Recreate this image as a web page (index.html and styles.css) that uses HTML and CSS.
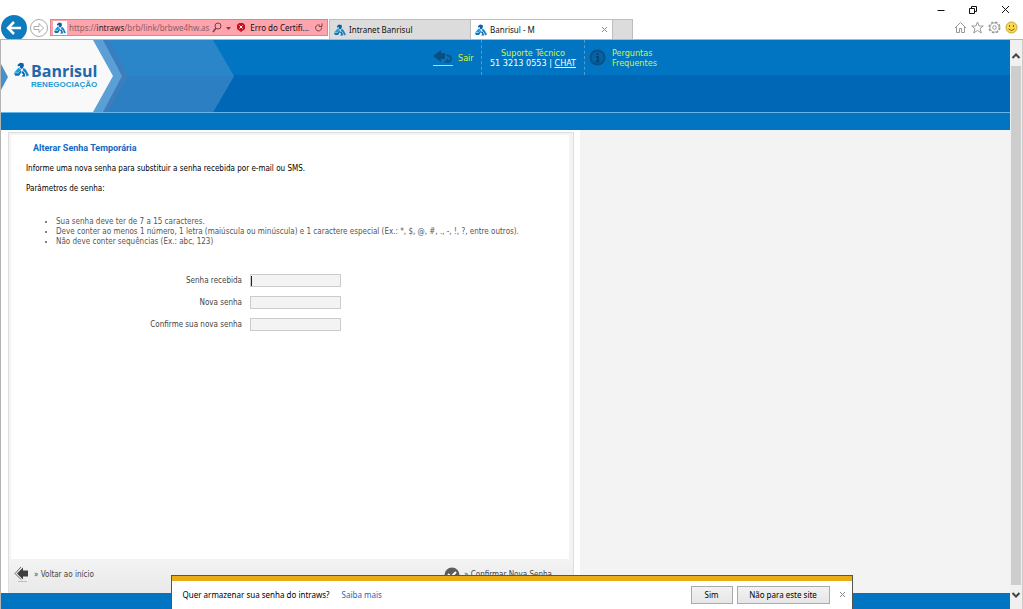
FILE: index.html
```html
<!DOCTYPE html>
<html lang="pt-BR">
<head>
<meta charset="utf-8">
<title>Banrisul - M</title>
<link rel="stylesheet" href="styles.css">
</head>
<body>
<svg class="defs" aria-hidden="true">
  <symbol id="mark" viewBox="0 0 24 24">
    <path d="M6 4l4-3 5 1 1 4-3 5-4-2 1-3-4 1z" fill="#0d5fa8"/>
    <path d="M7 9l5 3-5 5H0l3-3z" fill="#1aa0dc"/>
    <path d="M0 18h7l4-5 1 3-4 6H2z" fill="#0b72bb"/>
    <path d="M15 9l4 3 5 9-4 2-2-6-4-4z" fill="#1287cb"/>
    <path d="M12 17l2-3 3 4 1 5h-6l3-3z" fill="#0d5fa8"/>
  </symbol>
</svg>
<div class="window">
  <header class="chrome">
    <div class="controls">
      <button class="ctl" aria-label="Minimizar"><svg width="11" height="11" viewBox="0 0 11 11"><path d="M1.500 6.500h7" stroke="#111" fill="none"/></svg></button>
      <button class="ctl" aria-label="Restaurar"><svg width="11" height="11" viewBox="0 0 11 11"><path d="M1.500 4.500h5v5h-5zM3.500 4.500v-2h5v5h-2" stroke="#111" fill="none"/></svg></button>
      <button class="ctl" aria-label="Fechar"><svg width="11" height="11" viewBox="0 0 11 11"><path d="M2 2l7 7M9 2l-7 7" stroke="#111" fill="none"/></svg></button>
    </div>
    <div class="bar">
      <button class="back" aria-label="Voltar"><svg width="26" height="26" viewBox="0 0 26 26"><circle cx="13" cy="13" r="13" fill="#0f7dbd"/><path d="M20 13H8M13 7l-6 6 6 6" stroke="#fff" stroke-width="2.500" fill="none"/></svg></button>
      <button class="fwd" aria-label="Avançar"><svg width="18" height="18" viewBox="0 0 18 18"><circle cx="9" cy="9" r="8.500" fill="#fff" stroke="#aaa"/><path d="M4 7.500h5V4.500L13.500 9 9 13.500v-3H4z" fill="#fff" stroke="#aaa"/></svg></button>
      <div class="address">
        <span class="tile"><svg width="12" height="12"><use href="#mark"/></svg></span>
        <span class="url">https://<b>intraws</b>/brb/link/brbwe4hw.as</span>
        <svg width="20" height="12" viewBox="0 0 20 12"><circle cx="6" cy="4" r="3" fill="none" stroke="#754249"/><path d="M4 6L1 10" stroke="#754249" stroke-width="1.500"/><path d="M14 5h5l-2.500 3z" fill="#754249"/></svg>
        <svg class="shield" width="8" height="9" viewBox="0 0 8 9"><path d="M0 2L2 0h4l2 2v4L4 9 0 6z" fill="#c51420"/><path d="M2.500 2.500l3 3m0-3l-3 3" stroke="#fff"/></svg>
        <span class="cert">Erro do Certifi...</span>
        <svg width="9" height="10" viewBox="0 0 9 10"><path d="M7.500 4.500a3 3 0 1 1-1.500-2.200" fill="none" stroke="#754249"/><path d="M5 3.500h3v-3" fill="none" stroke="#754249"/></svg>
      </div>
      <nav class="tabs">
        <button class="tab"><svg width="12" height="12"><use href="#mark"/></svg>Intranet Banrisul</button>
        <button class="tab active"><svg width="12" height="12"><use href="#mark"/></svg>Banrisul - M<svg class="tabx" width="7" height="7" viewBox="0 0 7 7"><path d="M1 1l5 5M6 1L1 6" stroke="#888"/></svg></button>
        <button class="newtab" aria-label="Nova guia"></button>
      </nav>
      <div class="tools">
        <svg width="13" height="13" viewBox="0 0 13 13"><path d="M1 7l5.500-5.500L12 7M2.500 6v5.500h3v-4h2v4h3V6" fill="none" stroke="#999"/></svg>
        <svg width="13" height="13" viewBox="0 0 13 13"><path d="M6.500 1l1.600 4h4.200L9 7.700l1.300 4.300-3.800-2.600L2.700 12 4 7.700.7 5h4.200z" fill="none" stroke="#999"/></svg>
        <svg width="13" height="13" viewBox="0 0 13 13"><circle cx="6.500" cy="6.500" r="5.300" fill="none" stroke="#999" stroke-width="1.500" stroke-dasharray="2.500 1.650"/><circle cx="6.500" cy="6.500" r="4.500" fill="#fff" stroke="#999" stroke-width=".8"/><circle cx="6.500" cy="6.500" r="1.800" fill="none" stroke="#999"/></svg>
        <svg width="13" height="13" viewBox="0 0 13 13"><circle cx="6.500" cy="6.500" r="5.500" fill="#f9d94d" stroke="#c9a535"/><path d="M4.500 4v2M8.500 4v2M3.500 8q3 3 6 0" fill="none" stroke="#80631c"/></svg>
      </div>
    </div>
  </header>

  <div class="viewport">
    <div class="page">
      <div class="banner">
        <svg class="art" width="236" height="72" viewBox="0 0 236 72">
          <path d="M92 0H212L233 36 212 72H92z" fill="#2a86c8"/>
          <path d="M92 36H233L212 72H92z" fill="#2c7fc2"/>
          <path d="M92 0H107L127 36 107 72H92z" fill="#3b7dbd"/>
          <path d="M92 0H102L121 36 102 72H92z" fill="#5b9fd7"/>
          <path d="M0 0H92L112 36 92 72H0z" fill="#f8f9f8"/>
          <path d="M0 24L7 37 0 50z" fill="#4790c9"/>
        </svg>
        <div class="brand">
          <svg width="15" height="15"><use href="#mark"/></svg>
          <div class="names"><span class="name">Banrisul</span><span class="sub">RENEGOCIAÇÃO</span></div>
        </div>
        <nav class="links">
          <a class="link exit" href="#"><svg width="20" height="18" viewBox="0 0 20 18"><path d="M0 7l8-6v3h4v6H8v3z" fill="#084f83"/><path d="M13 6q6 1 5 5-1 2-5 2l2-3" fill="none" stroke="#0b568c" stroke-width="2"/><path d="M0 16.500h20" stroke="#b9d8ee"/></svg>Sair</a>
          <div class="link support"><span>Suporte Técnico</span><span class="phone">51 3213 0553 | <a href="#">CHAT</a></span></div>
          <a class="link faq" href="#"><svg width="17" height="17" viewBox="0 0 17 17"><circle cx="8.500" cy="8.500" r="7" fill="#0763a6" stroke="#075288" stroke-width="2"/><path d="M8.500 4v2M7 8h2v4M6.500 12.500h4" stroke="#064777" stroke-width="2" fill="none"/></svg><span>Perguntas<br>Frequentes</span></a>
        </nav>
      </div>
      <div class="strip"></div>
      <div class="columns">
        <main class="sheet">
          <form class="panel">
            <div class="content">
              <h1>Alterar Senha Temporária</h1>
              <p>Informe uma nova senha para substituir a senha recebida por e-mail ou SMS.</p>
              <p>Parâmetros de senha:</p>
              <ul>
                <li>Sua senha deve ter de 7 a 15 caracteres.</li>
                <li>Deve conter ao menos 1 número, 1 letra (maiúscula ou minúscula) e 1 caractere especial (Ex.: *, $, @, #, ., -, !, ?, entre outros).</li>
                <li>Não deve conter sequências (Ex.: abc, 123)</li>
              </ul>
              <div class="fields">
                <label for="old">Senha recebida</label><span class="slot caret"><input id="old" type="password"></span>
                <label for="new">Nova senha</label><span class="slot"><input id="new" type="password"></span>
                <label for="again">Confirme sua nova senha</label><span class="slot"><input id="again" type="password"></span>
              </div>
            </div>
            <div class="actions">
              <a href="#"><svg width="16" height="17" viewBox="0 0 16 17"><path d="M3 7.500l6-6v3h5v6H9v3z" fill="#3e3e3e"/><path d="M7 1L1 7.500l6 6" fill="none" stroke="#666"/><path d="M4 15.500h9" stroke="#bbb"/></svg>» Voltar ao início</a>
              <button type="button"><svg width="16" height="16" viewBox="0 0 16 16"><circle cx="8" cy="8" r="7.500" fill="#5c5c5c"/><path d="M4 7l3 3 5-5" fill="none" stroke="#fff" stroke-width="2"/></svg>» Confirmar Nova Senha</button>
            </div>
          </form>
        </main>
      </div>
      <div class="foot"></div>
    </div>
    <div class="scroll">
      <svg width="10" height="8" viewBox="0 0 10 8"><path d="M1.500 6L5 2.500 8.500 6" fill="none" stroke="#444" stroke-width="2"/></svg>
      <div class="thumb"></div>
      <svg width="10" height="8" viewBox="0 0 10 8"><path d="M1.500 2L5 5.500 8.500 2" fill="none" stroke="#444" stroke-width="2"/></svg>
    </div>
  </div>

  <aside class="notice">
    <span>Quer armazenar sua senha do intraws?</span>
    <a href="#">Saiba mais</a>
    <button class="btn yes">Sim</button>
    <button class="btn no">Não para este site</button>
    <button class="close" aria-label="Fechar"><svg width="7" height="7" viewBox="0 0 7 7"><path d="M1 1l5 5M6 1L1 6" stroke="#888"/></svg></button>
  </aside>
</div>
</body>
</html>
```

FILE: styles.css
```css
* { box-sizing: border-box; }
body { margin: 0; font: 9px/10px "DejaVu Sans Condensed", "DejaVu Sans", sans-serif; color: #555; }
button { padding: 0; border: 0; background: none; font: inherit; color: inherit; }
svg { flex: none; display: block; }
.defs { position: absolute; width: 0; height: 0; }
.window { position: relative; display: flex; flex-direction: column; min-height: 100vh; overflow: hidden; background: #fff; }

.chrome { display: flex; flex-direction: column; border-bottom: 1px solid #b4b4b4; height: 40px; font: 8px/12px "Noto Sans", sans-serif; color: #111; }
.controls { display: flex; justify-content: flex-end; gap: 21px; padding: 4px 12px 0; height: 15px; }
.bar { display: flex; align-items: flex-start; flex: 1; padding-left: 1px; }
.back { height: 24px; overflow: hidden; }
.fwd { margin: 4px 2px 0 3px; }
.address { display: flex; align-items: center; width: 278px; height: 17px; margin-top: 4px; padding: 0 4px 0 2px; background: #ffa3ad; border: 1px solid #d28a92; }
.tile { background: #fff; padding: 1px; }
.url { flex: 1; margin-left: 2px; color: #8a5f65; white-space: nowrap; }
.url b { font-weight: 400; color: #222; }
.shield { margin: 0 5px; }
.cert { margin-right: 5px; white-space: nowrap; }
.tabs { display: flex; margin: 4px 0 0 1px; height: 20px; }
.tab { display: flex; align-items: center; gap: 3px; width: 142px; padding: 0 4px; background: #dcdcdc; border: 1px solid #bdbdbd; border-bottom: 0; }
.tab.active { background: #fff; border-left: 0; }
.tabx { margin-left: auto; }
.newtab { width: 20px; background: #dcdcdc; border: 1px solid #bdbdbd; border-width: 1px 1px 0 0; }
.tools { display: flex; gap: 4px; margin: 6px 5px 0 auto; }

.viewport { display: flex; flex: 1; border-left: 1px solid #b4b4b4; }
.page { flex: 1; display: flex; flex-direction: column; min-width: 0; background: #f3f3f3; }
.banner { position: relative; display: flex; height: 73px; background: linear-gradient(#0275c2 0 35px, #0067b6 35px); border-bottom: 1px solid #69b6e6; }
.art { position: absolute; top: 0; left: 0; }
.brand { position: relative; display: flex; align-items: flex-start; gap: 2px; width: 432px; padding: 22px 0 0 13px; }
.names { display: flex; flex-direction: column; }
.name { font: 700 16px/18px "Open Sans", sans-serif; color: #2467ab; }
.sub { font: 700 8px/9px "Liberation Sans", sans-serif; color: #1b9ad7; }
.links { display: flex; height: 35px; color: #d9f03b; }
.link { display: flex; align-items: center; color: inherit; text-decoration: none; }
.exit { gap: 5px; width: 48px; }
.support { flex-direction: column; justify-content: center; width: 104px; border: dashed #4b9ed5; border-width: 0 1px; }
.phone, .phone a { color: #fff; }
.faq { gap: 6px; padding-left: 4px; }
.strip { height: 17px; background: #0275c2; }
.columns { flex: 1; display: flex; }
.sheet { display: flex; width: 579px; padding: 2px 6px 0 7px; background: #fff; }
.panel { flex: 1; min-width: 0; display: flex; flex-direction: column; border: 1px solid #dedede; border-bottom: 0; background: #f3f3f3; font-size: 8px; }
.content { flex: 1; margin: 2px 4px 0 2px; padding: 7px 15px; background: #fff; color: #000; }
h1 { margin: 0 7px; font: 700 9px/12px Roboto, sans-serif; color: #1169c2; }
p { margin: 10px 0; }
ul { margin: 23px 0 27px; padding-left: 30px; color: #555; white-space: nowrap; }
.fields { display: grid; grid-template-columns: 216px 91px; gap: 9px 8px; align-items: center; text-align: right; color: #444; }
.slot { position: relative; }
.slot input { display: block; width: 100%; height: 13px; padding: 0 2px; border: 1px solid #ccc; background: #f3f3f3; font: inherit; }
.caret::before { content: ""; position: absolute; left: 1px; top: 2px; width: 1px; height: 10px; background: #222; }
.actions { display: flex; justify-content: space-between; height: 34px; padding: 7px 21px 0 5px; background: linear-gradient(#f3f3f3, #e9e9e9); }
.actions a, .actions button { display: flex; align-items: center; gap: 4px; height: 17px; color: #444; text-decoration: none; }
.foot { height: 16px; background: #0275c2; }

.scroll { display: flex; flex-direction: column; align-items: center; gap: 6px; width: 13px; padding: 12px 1px 10px; background: #f0f0f0; border-right: 1px solid #ccc; }
.thumb { flex: 1; align-self: stretch; background: #cdcdcd; }

.notice { position: absolute; left: 50%; bottom: 0; transform: translateX(-50%); display: flex; align-items: center; width: 682px; height: 34px; padding: 4px 6px 0 11px; background: #fff; border: 1px solid #555; border-bottom: 0; box-shadow: inset 0 5px #e8ad14; font: 8px/12px "Noto Sans", sans-serif; color: #000; }
.notice a { margin-left: 12px; color: #1a66c2; text-decoration: none; }
.btn { height: 18px; border: 1px solid #aaa; background: linear-gradient(#f2f2f2, #e6e6e6); }
.yes { width: 42px; margin: 0 4px 0 auto; }
.no { width: 93px; }
.close { margin-left: 9px; }
```
